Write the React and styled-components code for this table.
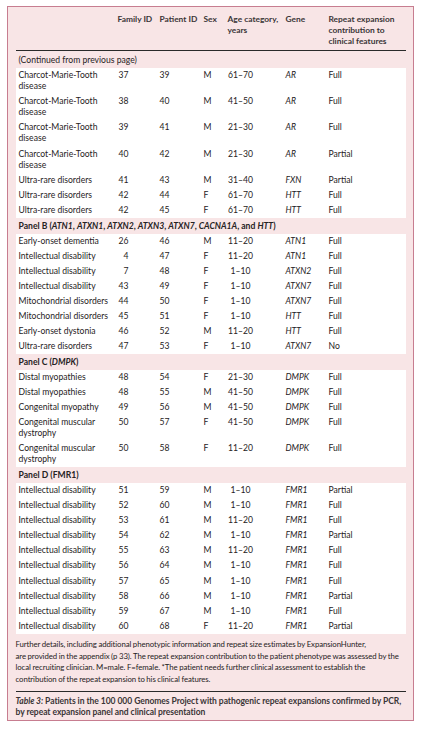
import React from 'react';
import styled, { createGlobalStyle } from 'styled-components';

const GlobalStyle = createGlobalStyle`
  html, body {
    margin: 0;
    padding: 0;
    background: #ffffff;
  }
  body {
    font-family: Lato, "Liberation Sans", sans-serif;
    color: #262223;
  }
`;

const COLS = '102px 42px 44px 24px 58px 43px 76px';

const Page = styled.div`
  width: 421px;
  box-sizing: border-box;
  padding: 6px 7px 8px 7px;
`;

const Frame = styled.div`
  border: 1.5px solid #c77d90;
  background: #f8e5e6;
  padding: 7px 7.5px 2px 7.5px;
`;

const HeadRow = styled.div`
  display: grid;
  grid-template-columns: ${COLS};
  padding-bottom: 3px;
  border-bottom: 1px solid #2a2a2a;
`;

const TH = styled.div`
  font-size: 8.4px;
  line-height: 11px;
  font-weight: 700;
  color: #3a3536;
  white-space: pre-line;
  padding-left: ${p => (p.first ? '3px' : '0')};
`;

const Band = styled.div`
  font-size: 8.6px;
  line-height: 11px;
  padding: ${p => (p.continued ? '3.5px 0 2.5px 3px' : '2.5px 0 2px 3px')};
  font-weight: ${p => (p.continued ? 400 : 700)};
  white-space: nowrap;
`;

const Block = styled.div`
  background: #ffffff;
`;

const Row = styled.div`
  display: grid;
  grid-template-columns: ${COLS};
  align-items: start;
  padding: 2px 0;
`;

const TD = styled.div`
  font-size: 8.6px;
  line-height: 11.1px;
  white-space: pre-line;
  padding-left: ${p => (p.first ? '3px' : '0')};
  font-style: ${p => (p.gene ? 'italic' : 'normal')};
`;

const RightNum = styled.span`
  display: inline-block;
  width: 11px;
  text-align: right;
`;

const CenterNum = styled.span`
  display: inline-block;
  width: 26px;
  text-align: center;
`;

const Footnote = styled.div`
  padding-top: 5px;
  font-size: 7.8px;
  line-height: 11.7px;
  letter-spacing: -0.08px;
  word-spacing: -0.3px;
  white-space: nowrap;
  padding-bottom: 5.5px;
  border-bottom: 1px solid #2a2a2a;
`;

const Caption = styled.div`
  padding-top: 4px;
  font-size: 8.5px;
  line-height: 10.7px;
  font-weight: 700;
  color: #3a3536;
  white-space: nowrap;
  letter-spacing: -0.05px;
`;

const headers = [
  'Family ID',
  'Patient ID',
  'Sex',
  'Age category,\nyears',
  'Gene',
  'Repeat expansion\ncontribution to\nclinical features',
];

const panels = [
  {
    label: <>(Continued from previous page)</>,
    continued: true,
    rows: [
      ['Charcot-Marie-Tooth\ndisease', '37', '39', 'M', '61–70', 'AR', 'Full'],
      ['Charcot-Marie-Tooth\ndisease', '38', '40', 'M', '41–50', 'AR', 'Full'],
      ['Charcot-Marie-Tooth\ndisease', '39', '41', 'M', '21–30', 'AR', 'Full'],
      ['Charcot-Marie-Tooth\ndisease', '40', '42', 'M', '21–30', 'AR', 'Partial'],
      ['Ultra-rare disorders', '41', '43', 'M', '31–40', 'FXN', 'Partial'],
      ['Ultra-rare disorders', '42', '44', 'F', '61–70', 'HTT', 'Full'],
      ['Ultra-rare disorders', '42', '45', 'F', '61–70', 'HTT', 'Full'],
    ],
  },
  {
    label: (
      <>
        Panel B (<i>ATN1</i>, <i>ATXN1</i>, <i>ATXN2</i>, <i>ATXN3</i>, <i>ATXN7</i>, <i>CACNA1A</i>, and <i>HTT</i>)
      </>
    ),
    rows: [
      ['Early-onset dementia', '26', '46', 'M', '11–20', 'ATN1', 'Full'],
      ['Intellectual disability', '4', '47', 'F', '11–20', 'ATN1', 'Full'],
      ['Intellectual disability', '7', '48', 'F', '1–10', 'ATXN2', 'Full'],
      ['Intellectual disability', '43', '49', 'F', '1–10', 'ATXN7', 'Full'],
      ['Mitochondrial disorders', '44', '50', 'F', '1–10', 'ATXN7', 'Full'],
      ['Mitochondrial disorders', '45', '51', 'F', '1–10', 'HTT', 'Full'],
      ['Early-onset dystonia', '46', '52', 'M', '11–20', 'HTT', 'Full'],
      ['Ultra-rare disorders', '47', '53', 'F', '1–10', 'ATXN7', 'No'],
    ],
  },
  {
    label: (
      <>
        Panel C (<i>DMPK</i>)
      </>
    ),
    rows: [
      ['Distal myopathies', '48', '54', 'F', '21–30', 'DMPK', 'Full'],
      ['Distal myopathies', '48', '55', 'M', '41–50', 'DMPK', 'Full'],
      ['Congenital myopathy', '49', '56', 'M', '41–50', 'DMPK', 'Full'],
      ['Congenital muscular\ndystrophy', '50', '57', 'F', '41–50', 'DMPK', 'Full'],
      ['Congenital muscular\ndystrophy', '50', '58', 'F', '11–20', 'DMPK', 'Full'],
    ],
  },
  {
    label: <>Panel D (FMR1)</>,
    rows: [
      ['Intellectual disability', '51', '59', 'M', '1–10', 'FMR1', 'Partial'],
      ['Intellectual disability', '52', '60', 'M', '1–10', 'FMR1', 'Full'],
      ['Intellectual disability', '53', '61', 'M', '11–20', 'FMR1', 'Full'],
      ['Intellectual disability', '54', '62', 'M', '1–10', 'FMR1', 'Partial'],
      ['Intellectual disability', '55', '63', 'M', '11–20', 'FMR1', 'Full'],
      ['Intellectual disability', '56', '64', 'M', '1–10', 'FMR1', 'Full'],
      ['Intellectual disability', '57', '65', 'M', '1–10', 'FMR1', 'Full'],
      ['Intellectual disability', '58', '66', 'M', '1–10', 'FMR1', 'Partial'],
      ['Intellectual disability', '59', '67', 'M', '1–10', 'FMR1', 'Full'],
      ['Intellectual disability', '60', '68', 'F', '11–20', 'FMR1', 'Partial'],
    ],
  },
];

export default function App() {
  return (
    <React.Fragment>
      <GlobalStyle />
      <Page>
        <Frame>
          <HeadRow>
            <TH first />
            {headers.map((h, i) => (
              <TH key={i}>{h}</TH>
            ))}
          </HeadRow>

          {panels.map((panel, pi) => (
            <React.Fragment key={pi}>
              <Band continued={panel.continued}>{panel.label}</Band>
              <Block>
                {panel.rows.map((r, ri) => (
                  <Row key={ri}>
                    <TD first>{r[0]}</TD>
                    <TD><RightNum>{r[1]}</RightNum></TD>
                    <TD>{r[2]}</TD>
                    <TD>{r[3]}</TD>
                    <TD><CenterNum>{r[4]}</CenterNum></TD>
                    <TD gene>{r[5]}</TD>
                    <TD>{r[6]}</TD>
                  </Row>
                ))}
              </Block>
            </React.Fragment>
          ))}

          <Footnote>
            Further details, including additional phenotypic information and repeat size estimates by ExpansionHunter,
            <br />
            are provided in the appendix (p 33). The repeat expansion contribution to the patient phenotype was assessed by the
            <br />
            local recruiting clinician. M=male. F=female. *The patient needs further clinical assessment to establish the
            <br />
            contribution of the repeat expansion to his clinical features.
          </Footnote>
          <Caption>
            <i>Table 3:</i> Patients in the 100 000 Genomes Project with pathogenic repeat expansions confirmed by PCR,
            <br />
            by repeat expansion panel and clinical presentation
          </Caption>
        </Frame>
      </Page>
    </React.Fragment>
  );
}
